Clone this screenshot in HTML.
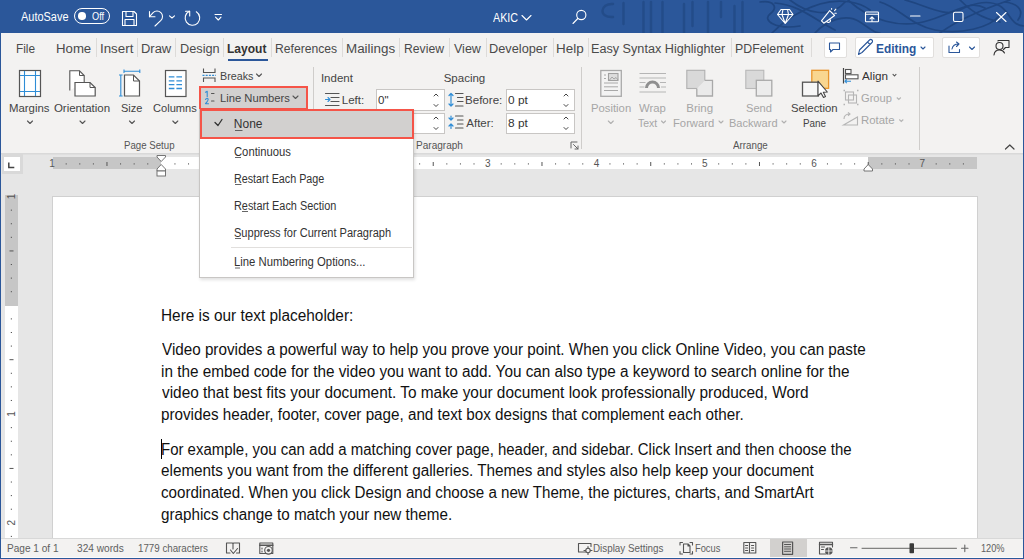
<!DOCTYPE html>
<html><head><meta charset="utf-8">
<style>
*{margin:0;padding:0;box-sizing:border-box}
html,body{width:1024px;height:559px;overflow:hidden;background:#f3f2f1;font-family:"Liberation Sans",sans-serif}
.a{position:absolute}
.t{position:absolute;white-space:nowrap;line-height:1;transform-origin:0 0}
svg{position:absolute;overflow:visible}
.sp{position:absolute;width:1px;top:38px;height:19px;background:#dddbd9}
.rs{position:absolute;width:1px;background:#cfcdcb}
.box{position:absolute;background:#fff;border:1px solid #c8c6c4}
</style></head><body>
<!-- title bar -->
<div class="a" style="left:0;top:0;width:1024px;height:33px;background:#2b579a"></div>
<svg style="left:0;top:0;overflow:hidden" width="1024" height="33" viewBox="0 0 1024 33">
 <g fill="none" stroke="#224a86" stroke-width="2.4" stroke-linecap="round" opacity="0.8">
  <path d="M613,4 C600,3 598,18 613,17"/>
  <path d="M623.5,3 V24 M643.5,2 V33 M651,2 V33 M662.5,2 V33 M684,4 V33 M692.5,2 V26 M708,2 V33 M721,2 V17 M734.5,6 V33 M742.5,2 V33"/>
 </g>
 <g fill="none" stroke="#1f4681" stroke-width="1.7" stroke-linecap="round">
  <path d="M760,2 C775,0 778,8 770,14 S775,30 800,26"/>
  <path d="M775,3 C800,5 815,20 835,30"/>
  <path d="M790,0 C805,12 830,20 845,2"/>
  <path d="M772,33 C785,20 800,10 820,4 S860,2 870,10"/>
  <path d="M815,33 C825,22 845,12 860,22 S875,33 880,33"/>
  <path d="M848,0 C870,20 900,30 930,20 S970,0 985,8"/>
  <path d="M880,2 C900,8 910,25 935,30 S990,28 1000,15"/>
  <path d="M905,0 C925,5 945,18 960,10 S990,0 1000,6 S1010,25 1024,26"/>
  <path d="M940,33 C955,22 975,12 1010,0"/>
  <path d="M960,0 C970,10 980,18 1000,22"/>
  <path d="M1005,2 C1020,4 1024,12 1018,20"/>
 </g>
</svg>
<!-- autosave toggle -->
<div class="a" style="left:74px;top:8px;width:36px;height:16px;border:1.2px solid #fff;border-radius:8px"></div>
<div class="a" style="left:78.3px;top:12.3px;width:7.6px;height:7.6px;background:#fff;border-radius:50%"></div>
<svg style="left:0;top:0" width="1024" height="33" viewBox="0 0 1024 33">
 <g fill="none" stroke="#fff" stroke-width="1.1" stroke-linejoin="round" stroke-linecap="round">
  <!-- save -->
  <path d="M122.5,11.5 H134 L136.5,14 V25.5 H122.5 Z"/>
  <path d="M126,11.5 V16.5 H133 V11.5"/>
  <path d="M125,25.5 V19.5 H134 V25.5"/>
  <!-- undo -->
  <path d="M149.5,16.6 L153.1,12.6 A5.5,5.5 0 0 1 160.9,20.4 L155,26"/>
  <path d="M149.5,11.6 V16.8 H155"/>
  <path d="M169.5,15.8 L172,18 L174.5,15.8"/>
  <!-- redo -->
  <path d="M189.5,11.3 A7.3,7.3 0 1 0 196.3,11.8"/>
  <path d="M185.5,11.3 H189.7 V16"/>
  <!-- customize -->
  <path d="M215,14.5 H221.5 M215.5,17.2 L218.3,20 L221,17.2"/>
  <!-- akic chevron -->
  <path d="M522,15.5 L526.5,20 L531,15.5"/>
  <!-- search -->
  <circle cx="581.3" cy="15" r="4.6"/>
  <path d="M577.8,18.5 L573,23.5"/>
  <!-- diamond -->
  <path d="M781,9.5 H789.5 L793,14.5 L785.2,23.5 L777.5,14.5 Z M777.5,14.5 H793 M783,9.5 L782,14.5 L785.2,23.5 L788.5,14.5 L787.5,9.5"/>
  <!-- megaphone -->
  <path d="M829.7,10.6 L834.6,15.5 L823.8,23.2 L821.5,20.9 Z M826.6,21.2 A1.9,1.9 0 0 0 830.3,19.8 M831.6,8.6 V9.2 M834.6,10.6 L835.9,9.1 M834.9,13.2 H836.3"/>
  <!-- ribbon display -->
  <rect x="865.5" y="12" width="13" height="9.8" rx="0.8"/>
  <path d="M865.5,14.3 H878.5 M872,21.5 V16.8 M870,18.8 L872,16.8 L874,18.8"/>
  <!-- min max close -->
  <path d="M910.5,16 H920"/>
  <rect x="953.5" y="12.3" width="9.5" height="9.2" rx="1.5"/>
  <path d="M996.5,12.5 L1006,21.5 M1006,12.5 L996.5,21.5"/>
 </g>
</svg>
<!-- window borders -->
<div class="a" style="left:0;top:33px;width:1px;height:526px;background:#2b579a"></div>
<div class="a" style="left:1023px;top:33px;width:1px;height:526px;background:#2b579a"></div>
<!-- tab separators -->
<div class="sp" style="left:96px"></div><div class="sp" style="left:137px"></div><div class="sp" style="left:175px"></div>
<div class="sp" style="left:223px"></div><div class="sp" style="left:271px"></div><div class="sp" style="left:342px"></div>
<div class="sp" style="left:399px"></div><div class="sp" style="left:449px"></div><div class="sp" style="left:486px"></div>
<div class="sp" style="left:553px"></div><div class="sp" style="left:588px"></div><div class="sp" style="left:731px"></div>
<div class="sp" style="left:811px"></div>
<div class="a" style="left:228px;top:58.5px;width:40px;height:2.5px;background:#2b579a"></div>
<!-- right buttons -->
<div class="box" style="left:823.5px;top:36.5px;width:23px;height:21.5px;border-color:#e1dfdd;border-radius:2px"></div>
<div class="box" style="left:854.5px;top:36.5px;width:79px;height:21.5px;border-color:#e1dfdd;border-radius:2px"></div>
<div class="box" style="left:941.5px;top:36.5px;width:38px;height:21.5px;border-color:#e1dfdd;border-radius:2px"></div>
<svg style="left:0;top:0" width="1024" height="62" viewBox="0 0 1024 62">
 <g fill="none" stroke="#2b579a" stroke-width="1.1" stroke-linejoin="round" stroke-linecap="round">
  <path d="M829.5,43 H839.5 V49.5 H833 L830.5,52 V49.5 H829.5 Z"/>
  <path d="M858.5,54.5 L859.5,50 L869.5,40 A1.6,1.6 0 0 1 872,42.5 L862,52.5 Z M867.5,42 L870,44.5"/>
  <path d="M921,47 L923,49 L925,47"/>
  <path d="M949,46 V52.5 H959.5 V49.5 M952,49 Q953,44 958.5,44 M956.5,42 L959,44 L956.5,46.5"/>
  <path d="M969.5,47 L972,49.5 L974.5,47"/>
 </g>
 <g fill="none" stroke="#333" stroke-width="1.1" stroke-linejoin="round" stroke-linecap="round">
  <circle cx="999.5" cy="46" r="3.5"/>
  <path d="M994,55 Q994.5,50 999.5,50 Q1003,50 1004.5,53"/>
  <path d="M998,41 V40.5 H1009 V47.5 H1005.5 L1003.5,49.5"/>
 </g>
</svg>
<!-- ribbon separators -->
<div class="rs" style="left:313px;top:67px;height:83px"></div>
<div class="rs" style="left:581px;top:67px;height:82px"></div>
<div class="rs" style="left:919px;top:67px;height:83px"></div>
<!-- ribbon icons -->
<svg style="left:0;top:0" width="1024" height="156" viewBox="0 0 1024 156">
 <g fill="none" stroke-linejoin="miter">
  <!-- margins -->
  <rect x="19.5" y="70.5" width="21" height="26" fill="#fff" stroke="#555" stroke-width="1.2"/>
  <path d="M24.5,71 V96 M35.5,71 V96 M20,75.5 H40 M20,91.5 H40" stroke="#2f8dd6" stroke-width="1.1"/>
  <!-- orientation -->
  <path d="M69.8,90.5 V70.8 H79.5 L84.2,75.5 V82" stroke="#555" stroke-width="1.1" fill="#fff"/>
  <path d="M79.5,70.8 V75.5 H84.2" stroke="#555" stroke-width="1"/>
  <path d="M75,96 V82.5 H90 L95.2,87.5 V96 Z" stroke="#555" stroke-width="1.2" fill="#fff"/>
  <path d="M90,82.5 V87.5 H95.2" stroke="#555" stroke-width="1"/>
  <!-- size -->
  <path d="M124.5,96 V75 H133.5 L139.5,81 V96 Z" stroke="#555" stroke-width="1.2" fill="#fff"/>
  <path d="M133.5,75 V81 H139.5" stroke="#555" stroke-width="1"/>
  <path d="M120.8,75 V96 M119,75 H122.6 M119,96 H122.6 M124,71.2 H139.8 M124,69.5 V73 M139.8,69.5 V73" stroke="#2f8dd6" stroke-width="1.1"/>
  <!-- columns -->
  <rect x="165.5" y="70.5" width="20.5" height="26" fill="#fff" stroke="#555" stroke-width="1.2"/>
  <path d="M168.8,76.8 H174.4 M176.4,76.8 H182 M168.8,80.8 H174.4 M176.4,80.8 H182 M168.8,84.7 H174.4 M176.4,84.7 H182 M168.8,88.5 H174.4 M176.4,88.5 H182" stroke="#2f8dd6" stroke-width="1.3"/>
  <!-- chevrons under big buttons -->
  <g stroke="#555" stroke-width="1.1" stroke-linecap="round" stroke-linejoin="round">
   <path d="M27.5,121 L30,123.5 L32.5,121"/>
   <path d="M80,121 L82.5,123.5 L85,121"/>
   <path d="M129.5,121 L132,123.5 L134.5,121"/>
   <path d="M172.8,121 L175.3,123.5 L177.8,121"/>
   <path d="M256.5,74 L259,76.5 L261.5,74"/>
   <path d="M893,74.3 L894.5,76 L896,74.3"/>
  </g>
  <!-- breaks -->
  <path d="M203.5,68.5 V72.5 H215 V68.5 M203.5,82 V78 H215 V82" stroke="#555" stroke-width="1.1"/>
  <path d="M202.5,75.3 H216" stroke="#2f8dd6" stroke-width="1.2" stroke-dasharray="2,1.2"/>
 </g>
</svg>
<!-- input boxes -->
<div class="box" style="left:376px;top:89px;width:69px;height:21.5px;border-color:#c8c6c4"></div>
<div class="box" style="left:376px;top:112.5px;width:69px;height:21px;border-color:#c8c6c4"></div>
<div class="box" style="left:506px;top:89px;width:68.5px;height:21.5px;border-color:#c8c6c4"></div>
<div class="box" style="left:506px;top:112.5px;width:68.5px;height:21px;border-color:#c8c6c4"></div>
<!-- line numbers button -->
<div class="a" style="left:198.5px;top:85.5px;width:109.5px;height:24.5px;background:#d2d0cf;border:2.5px solid #f55448"></div>
<svg style="left:0;top:0" width="1024" height="156" viewBox="0 0 1024 156">
 <g fill="none" stroke-linecap="round" stroke-linejoin="round">
  <path d="M205.5,92.2 L207.2,91.3 V96.8" stroke="#2f8dd6" stroke-width="1.1"/>
  <path d="M205.5,99.3 Q206.8,98 208,98.8 Q208.8,99.8 205.5,103.7 H208.5" stroke="#2f8dd6" stroke-width="1.1"/>
  <path d="M211.5,93.5 H214 M211.5,101 H214" stroke="#555" stroke-width="1.1"/>
  <path d="M293,96 L295.5,98.5 L298,96" stroke="#555" stroke-width="1.1"/>
  <!-- indent left icon -->
  <path d="M325.5,93.5 H339 M331,97.5 H339 M331,101.5 H339 M325.5,105.5 H339" stroke="#555" stroke-width="1.2"/>
  <path d="M325.5,99.5 H330 M328,97.5 L330,99.5 L328,101.5" stroke="#2f8dd6" stroke-width="1.1"/>
  <!-- before / after icons -->
  <path d="M451,93.5 V106 M449,95.5 L451,93.5 L453,95.5 M449,104 L451,106 L453,104" stroke="#2f8dd6" stroke-width="1.2"/>
  <path d="M455.5,93.5 H463 M457.5,97.5 H463 M457.5,101.5 H463 M455.5,106 H463" stroke="#555" stroke-width="1.2"/>
  <path d="M451,116 V120 M449,118 L451,120 L453,118 M451,124 V128.5 M449,126 L451,124 L453,126" stroke="#2f8dd6" stroke-width="1.2"/>
  <path d="M455.5,116 H463 M457.5,120 H463 M457.5,124 H463 M455.5,128 H463" stroke="#555" stroke-width="1.2"/>
  <!-- spinners -->
  <g stroke="#444" stroke-width="1">
   <path d="M434,96 L436,94 L438,96 M434,104.5 L436,106.5 L438,104.5"/>
   <path d="M434,119 L436,117 L438,119 M434,127.5 L436,129.5 L438,127.5"/>
   <path d="M564,96 L566,94 L568,96 M564,104.5 L566,106.5 L568,104.5"/>
   <path d="M564,119 L566,117 L568,119 M564,127.5 L566,129.5 L568,127.5"/>
  </g>
  <!-- paragraph launcher -->
  <path d="M571,148 V142 H577 M573.5,144.5 L578,149 M578,146 V149 H575" stroke="#666" stroke-width="1"/>
  <!-- collapse chevron -->
  <path d="M1005.5,149 L1009.8,145 L1014,149" stroke="#444" stroke-width="1.2"/>
 </g>
</svg>
<!-- arrange icons -->
<svg style="left:0;top:0" width="1024" height="156" viewBox="0 0 1024 156">
 <g fill="none" stroke-linejoin="miter">
  <!-- position -->
  <rect x="600.8" y="70.5" width="20.5" height="25.8" fill="#f3f3f3" stroke="#a9a9a9" stroke-width="1.3"/>
  <rect x="608.5" y="73.5" width="9.5" height="7" fill="#ddd" stroke="#a0a0a0" stroke-width="1.1"/>
  <path d="M604,75 H606 M604,78.5 H606 M604,83 H618 M604,86.8 H618 M604,90.5 H618" stroke="#a9a9a9" stroke-width="1"/>
  <path d="M609.5,80 L612,77 L614,79 L616,77.5 L618,80" stroke="#a0a0a0" stroke-width="0.9"/>
  <!-- wrap text -->
  <path d="M639.5,73.5 H666 M639.5,78 H666 M639.5,82.5 H645.5 M660,82.5 H666 M639.5,87 H644.5 M661,87 H666 M639.5,92 H666" stroke="#b5b5b5" stroke-width="1.1"/>
  <path d="M646.5,88 A6,6 0 0 1 658.5,88" stroke="#8f8f8f" stroke-width="3"/>
  <!-- bring forward -->
  <rect x="686.8" y="70.3" width="18" height="18.2" fill="#d9d9d9" stroke="#b0b0b0" stroke-width="1.1"/>
  <path d="M705,80.3 H712.5 V96 H696.8 V88.8" fill="#eaeaea" stroke="#a9a9a9" stroke-width="1.3"/>
  <!-- send backward -->
  <rect x="745.8" y="70.3" width="18" height="18.2" fill="#d9d9d9" stroke="#b8b8b8" stroke-width="1.1"/>
  <rect x="756.3" y="80.3" width="15.5" height="15.7" fill="#ececec" stroke="#a9a9a9" stroke-width="1.3"/>
  <!-- selection pane -->
  <rect x="811.8" y="70.3" width="16.8" height="18" fill="#f9d690" stroke="#e8952d" stroke-width="1.3"/>
  <rect x="802.5" y="82.2" width="15.8" height="13.8" fill="#f7f7f7" stroke="#555" stroke-width="1.3"/>
  <path d="M818,81.2 V95.8 L821,93 L823.5,97.5 L825.5,96.5 L823.3,92.2 L827.3,92 Z" fill="#fff" stroke="#444" stroke-width="1.1" stroke-linejoin="round"/>
  <!-- align -->
  <path d="M843.5,68 V83.5" stroke="#444" stroke-width="1.2"/>
  <rect x="845.5" y="69.5" width="5.5" height="4" fill="#fff" stroke="#555" stroke-width="1.1"/>
  <rect x="845.5" y="74.8" width="12.5" height="4" fill="#fff" stroke="#555" stroke-width="1.1"/>
  <path d="M845,81.3 H851 M846.8,79.5 L845,81.3 L846.8,83.1" stroke="#2f8dd6" stroke-width="1.1"/>
  <!-- group -->
  <rect x="845.5" y="92" width="8" height="8" stroke="#b5b5b5" stroke-width="1.1"/>
  <rect x="848.5" y="95" width="8" height="8" stroke="#b5b5b5" stroke-width="1.1"/>
  <path d="M843.5,90.5 h1.5 M857,90.5 h1.5 M843.5,104.5 h1.5 M857,104.5 h1.5" stroke="#b5b5b5" stroke-width="1.6"/>
  <path d="M896.8,97.5 L898.8,99.5 L900.8,97.5" stroke="#b5b5b5" stroke-width="1.1"/>
  <!-- rotate -->
  <path d="M843.5,125 L857.5,117 V125 Z" stroke="#b5b5b5" stroke-width="1.1"/>
  <path d="M844,119 Q844,114 850,114 M848,112.3 L850,114 L848,115.8" stroke="#b5b5b5" stroke-width="1.1"/>
  <path d="M899.3,119.5 L901.3,121.5 L903.3,119.5" stroke="#b5b5b5" stroke-width="1.1"/>
  <g stroke="#b0b0b0" stroke-width="1.1" stroke-linecap="round" stroke-linejoin="round">
   <path d="M608.3,121 L610.8,123.5 L613.3,121"/>
   <path d="M661.5,121 L663.5,123 L665.5,121"/>
   <path d="M719,121 L721,123 L723,121"/>
   <path d="M782,121 L784,123 L786,121"/>
  </g>
 </g>
</svg>
<!-- ribbon bottom shadow -->
<div class="a" style="left:1px;top:152.5px;width:1022px;height:2.5px;background:linear-gradient(#d6d6d6,#e2e2e2)"></div>
<!-- doc area -->
<div class="a" style="left:1px;top:155px;width:1022px;height:383px;background:#e6e6e6"></div>
<!-- tab selector -->
<div class="a" style="left:2px;top:154px;width:21px;height:20px;background:#d9d9d9"></div>
<div class="a" style="left:4px;top:156.5px;width:15.5px;height:14.5px;background:#fff"></div>
<svg style="left:0;top:0" width="40" height="180" viewBox="0 0 40 180"><path d="M8.8,162.5 V167.6 H14.3" fill="none" stroke="#444" stroke-width="1.5"/></svg>
<!-- horizontal ruler -->
<div class="a" style="left:52.5px;top:157px;width:924.8px;height:12px;background:#c6c6c6"></div>
<div class="a" style="left:161px;top:157px;width:707.2px;height:12px;background:#fff"></div>
<svg style="left:0;top:0" width="1024" height="200" viewBox="0 0 1024 200" id="hr"><rect x="65.69" y="163.3" width="1" height="1.2" fill="#555"/><rect x="79.29" y="163.3" width="1" height="1.2" fill="#555"/><rect x="92.88" y="163.3" width="1" height="1.2" fill="#555"/><rect x="106.47" y="162" width="1" height="4" fill="#555"/><rect x="120.07" y="163.3" width="1" height="1.2" fill="#555"/><rect x="133.66" y="163.3" width="1" height="1.2" fill="#555"/><rect x="147.26" y="163.3" width="1" height="1.2" fill="#555"/><rect x="174.44" y="163.3" width="1" height="1.2" fill="#555"/><rect x="188.04" y="163.3" width="1" height="1.2" fill="#555"/><rect x="201.63" y="163.3" width="1" height="1.2" fill="#555"/><rect x="215.22" y="162" width="1" height="4" fill="#555"/><rect x="228.82" y="163.3" width="1" height="1.2" fill="#555"/><rect x="242.41" y="163.3" width="1" height="1.2" fill="#555"/><rect x="256.01" y="163.3" width="1" height="1.2" fill="#555"/><rect x="283.19" y="163.3" width="1" height="1.2" fill="#555"/><rect x="296.79" y="163.3" width="1" height="1.2" fill="#555"/><rect x="310.38" y="163.3" width="1" height="1.2" fill="#555"/><rect x="323.98" y="162" width="1" height="4" fill="#555"/><rect x="337.57" y="163.3" width="1" height="1.2" fill="#555"/><rect x="351.16" y="163.3" width="1" height="1.2" fill="#555"/><rect x="364.76" y="163.3" width="1" height="1.2" fill="#555"/><rect x="391.94" y="163.3" width="1" height="1.2" fill="#555"/><rect x="405.54" y="163.3" width="1" height="1.2" fill="#555"/><rect x="419.13" y="163.3" width="1" height="1.2" fill="#555"/><rect x="432.73" y="162" width="1" height="4" fill="#555"/><rect x="446.32" y="163.3" width="1" height="1.2" fill="#555"/><rect x="459.91" y="163.3" width="1" height="1.2" fill="#555"/><rect x="473.51" y="163.3" width="1" height="1.2" fill="#555"/><rect x="500.69" y="163.3" width="1" height="1.2" fill="#555"/><rect x="514.29" y="163.3" width="1" height="1.2" fill="#555"/><rect x="527.88" y="163.3" width="1" height="1.2" fill="#555"/><rect x="541.48" y="162" width="1" height="4" fill="#555"/><rect x="555.07" y="163.3" width="1" height="1.2" fill="#555"/><rect x="568.66" y="163.3" width="1" height="1.2" fill="#555"/><rect x="582.26" y="163.3" width="1" height="1.2" fill="#555"/><rect x="609.44" y="163.3" width="1" height="1.2" fill="#555"/><rect x="623.04" y="163.3" width="1" height="1.2" fill="#555"/><rect x="636.63" y="163.3" width="1" height="1.2" fill="#555"/><rect x="650.23" y="162" width="1" height="4" fill="#555"/><rect x="663.82" y="163.3" width="1" height="1.2" fill="#555"/><rect x="677.41" y="163.3" width="1" height="1.2" fill="#555"/><rect x="691.01" y="163.3" width="1" height="1.2" fill="#555"/><rect x="718.19" y="163.3" width="1" height="1.2" fill="#555"/><rect x="731.79" y="163.3" width="1" height="1.2" fill="#555"/><rect x="745.38" y="163.3" width="1" height="1.2" fill="#555"/><rect x="758.98" y="162" width="1" height="4" fill="#555"/><rect x="772.57" y="163.3" width="1" height="1.2" fill="#555"/><rect x="786.16" y="163.3" width="1" height="1.2" fill="#555"/><rect x="799.76" y="163.3" width="1" height="1.2" fill="#555"/><rect x="826.94" y="163.3" width="1" height="1.2" fill="#555"/><rect x="840.54" y="163.3" width="1" height="1.2" fill="#555"/><rect x="854.13" y="163.3" width="1" height="1.2" fill="#555"/><rect x="867.73" y="162" width="1" height="4" fill="#555"/><rect x="881.32" y="163.3" width="1" height="1.2" fill="#555"/><rect x="894.91" y="163.3" width="1" height="1.2" fill="#555"/><rect x="908.51" y="163.3" width="1" height="1.2" fill="#555"/><rect x="935.69" y="163.3" width="1" height="1.2" fill="#555"/><rect x="949.29" y="163.3" width="1" height="1.2" fill="#555"/><rect x="962.88" y="163.3" width="1" height="1.2" fill="#555"/><g fill="#fff" stroke="#666" stroke-width="0.9"><path d="M157,155.5 H165.5 V157 L161.2,161.5 L157,157 Z"/><path d="M161.2,164.5 L165.5,169 V171 H157 V169 Z"/><rect x="157" y="171" width="8.5" height="5"/><path d="M868.2,164.5 L872.5,169 V171 H864 V169 Z"/></g></svg>
<!-- vertical ruler -->
<div class="a" style="left:5px;top:195px;width:13px;height:110.5px;background:#c6c6c6"></div>
<div class="a" style="left:5px;top:305.5px;width:13px;height:232px;background:#fff"></div>
<svg style="left:0;top:0" width="40" height="559" viewBox="0 0 40 559" id="vr"><rect x="10.8" y="209.64" width="1.2" height="1" fill="#555"/><rect x="10.8" y="223.24" width="1.2" height="1" fill="#555"/><rect x="10.8" y="236.83" width="1.2" height="1" fill="#555"/><rect x="9.5" y="250.43" width="4" height="1" fill="#555"/><rect x="10.8" y="264.02" width="1.2" height="1" fill="#555"/><rect x="10.8" y="277.61" width="1.2" height="1" fill="#555"/><rect x="10.8" y="291.21" width="1.2" height="1" fill="#555"/><rect x="10.8" y="318.39" width="1.2" height="1" fill="#555"/><rect x="10.8" y="331.99" width="1.2" height="1" fill="#555"/><rect x="10.8" y="345.58" width="1.2" height="1" fill="#555"/><rect x="9.5" y="359.18" width="4" height="1" fill="#555"/><rect x="10.8" y="372.77" width="1.2" height="1" fill="#555"/><rect x="10.8" y="386.36" width="1.2" height="1" fill="#555"/><rect x="10.8" y="399.96" width="1.2" height="1" fill="#555"/><rect x="10.8" y="427.14" width="1.2" height="1" fill="#555"/><rect x="10.8" y="440.74" width="1.2" height="1" fill="#555"/><rect x="10.8" y="454.33" width="1.2" height="1" fill="#555"/><rect x="9.5" y="467.93" width="4" height="1" fill="#555"/><rect x="10.8" y="481.52" width="1.2" height="1" fill="#555"/><rect x="10.8" y="495.11" width="1.2" height="1" fill="#555"/><rect x="10.8" y="508.71" width="1.2" height="1" fill="#555"/><rect x="10.8" y="535.89" width="1.2" height="1" fill="#555"/><text x="0" y="0" transform="translate(15.2,196.50) rotate(-90)" text-anchor="middle" font-family="Liberation Sans" font-size="10" fill="#555">1</text><text x="0" y="0" transform="translate(15.2,414.05) rotate(-90)" text-anchor="middle" font-family="Liberation Sans" font-size="10" fill="#555">1</text><text x="0" y="0" transform="translate(15.2,522.80) rotate(-90)" text-anchor="middle" font-family="Liberation Sans" font-size="10" fill="#555">2</text></svg>
<!-- page -->
<div class="a" style="left:52px;top:196px;width:926px;height:343px;background:#fff;border:1px solid #d0d0d0;border-bottom:none"></div>
<div class="a" style="left:161px;top:439px;width:1px;height:19.5px;background:#000"></div>
<!-- status bar -->
<div class="a" style="left:1px;top:537.5px;width:1022px;height:1px;background:#d8d8d8"></div>
<div class="a" style="left:1px;top:538.5px;width:1022px;height:19px;background:#f3f2f1"></div>
<div class="a" style="left:769.5px;top:538.5px;width:37.5px;height:19.5px;background:#d2d0ce"></div>
<div class="a" style="left:1px;top:557px;width:1022px;height:1px;background:#fafafa"></div><div class="a" style="left:0;top:558px;width:1024px;height:1px;background:#2b579a"></div>
<svg style="left:0;top:0" width="1024" height="559" viewBox="0 0 1024 559">
 <g fill="none" stroke="#555" stroke-width="1.1" stroke-linejoin="round" stroke-linecap="round">
  <!-- book -->
  <path d="M226.5,543 H232.5 L233,544 L233.5,543 H239.5 V553 H236.5 M226.5,543 V553 H230 M233,544 V549"/>
  <path d="M230.5,550 L233.3,553.5 L237.5,548.5"/>
  <!-- track -->
  <rect x="259.8" y="543" width="13" height="10.5"/>
  <path d="M259.8,545.3 H272.8" stroke-width="1.6"/>
  <circle cx="268.5" cy="550.3" r="3.8" fill="#f3f2f1"/>
  <circle cx="268.5" cy="550.3" r="1.6" fill="#555" stroke="none"/>
  <path d="M262,548 v1 M262,551 v1"/>
  <!-- display settings -->
  <path d="M586,552 H578.5 V543.5 H591 V546.5"/>
  <circle cx="588" cy="550.5" r="2.2"/>
  <path d="M588,546.5 V548 M588,553 V554.5 M584,550.5 H585.5 M590.5,550.5 H592"/>
  <!-- focus -->
  <path d="M680,545 V542.5 H682.5 M690,542.5 H692.5 V545 M692.5,551.5 V554 H690 M682.5,554 H680 V551.5"/>
  <path d="M683.5,544 H688 L690,546 V552.5 H683.5 Z M688,544 V546 H690"/>
  <!-- read mode -->
  <path d="M743.8,542.5 H749.5 V553 H743.8 Z M749.5,542.5 H755.8 V553 H749.5"/>
  <path d="M745.5,545.5 h2.2 M745.5,548 h2.2 M745.5,550.5 h2.2 M751.5,545.5 h2.2 M751.5,548 h2.2 M751.5,550.5 h2.2" stroke-width="1"/>
  <!-- print layout -->
  <rect x="782.6" y="542" width="10" height="12.3" stroke="#555" stroke-width="1.2"/>
  <path d="M784.5,544.5 h6.2 M784.5,546.8 h6.2 M784.5,549 h6.2 M784.5,551.3 h6.2" stroke-width="1"/>
  <!-- web layout -->
  <path d="M826,554 H819.5 V542.2 H832.5 V547"/>
  <path d="M819.5,544.5 H832.5" stroke-width="1.4"/>
  <path d="M821.5,547 h3 M821.5,549.5 h2" stroke-width="1"/>
  <circle cx="828.8" cy="551" r="3.8" fill="#555" stroke="none"/>
  <path d="M828.8,547.5 V554.5 M825.3,551 H832.3" stroke="#f3f2f1" stroke-width="0.9"/>
  <!-- zoom -->
  <path d="M850.5,547.8 H857" stroke="#666"/>
  <path d="M862,548.3 H956.5" stroke="#666" stroke-width="1"/>
  <path d="M961.5,548.3 H968 M964.8,545 V551.6" stroke="#666"/>
 </g>
 <rect x="909.5" y="543.3" width="4.5" height="10" rx="0.8" fill="#3a3a3a"/>
</svg>
<div class="t" style="left:20.50px;top:11.00px;font-size:12.5px;font-weight:400;color:#ffffff;transform:scaleX(0.8759);">AutoSave</div>
<div class="t" style="left:92.00px;top:10.90px;font-size:10.5px;font-weight:400;color:#ffffff;transform:scaleX(0.8786);">Off</div>
<div class="t" style="left:493.10px;top:12.00px;font-size:12px;font-weight:400;color:#ffffff;transform:scaleX(0.8963);">AKIC</div>
<div class="t" style="left:16.25px;top:43.20px;font-size:12.5px;font-weight:400;color:#4a4a4a;transform:scaleX(0.9474);">File</div>
<div class="t" style="left:56.14px;top:43.20px;font-size:12.5px;font-weight:400;color:#4a4a4a;transform:scaleX(1.0562);">Home</div>
<div class="t" style="left:99.73px;top:43.20px;font-size:12.5px;font-weight:400;color:#4a4a4a;transform:scaleX(1.0667);">Insert</div>
<div class="t" style="left:140.96px;top:43.20px;font-size:12.5px;font-weight:400;color:#4a4a4a;transform:scaleX(1.0357);">Draw</div>
<div class="t" style="left:179.68px;top:43.20px;font-size:12.5px;font-weight:400;color:#4a4a4a;transform:scaleX(1.0189);">Design</div>
<div class="t" style="left:275.43px;top:43.20px;font-size:12.5px;font-weight:400;color:#4a4a4a;transform:scaleX(0.9714);">References</div>
<div class="t" style="left:346.23px;top:43.20px;font-size:12.5px;font-weight:400;color:#4a4a4a;transform:scaleX(1.0705);">Mailings</div>
<div class="t" style="left:403.82px;top:43.20px;font-size:12.5px;font-weight:400;color:#4a4a4a;transform:scaleX(0.9750);">Review</div>
<div class="t" style="left:454.00px;top:43.20px;font-size:12.5px;font-weight:400;color:#4a4a4a;">View</div>
<div class="t" style="left:489.48px;top:43.20px;font-size:12.5px;font-weight:400;color:#4a4a4a;transform:scaleX(1.0214);">Developer</div>
<div class="t" style="left:556.42px;top:43.20px;font-size:12.5px;font-weight:400;color:#4a4a4a;transform:scaleX(1.0750);">Help</div>
<div class="t" style="left:591.49px;top:43.20px;font-size:12.5px;font-weight:400;color:#4a4a4a;transform:scaleX(1.0114);">Easy Syntax Highlighter</div>
<div class="t" style="left:735.01px;top:43.20px;font-size:12.5px;font-weight:400;color:#4a4a4a;transform:scaleX(0.9884);">PDFelement</div>
<div class="t" style="left:227.24px;top:43.20px;font-size:12.5px;font-weight:700;color:#333;transform:scaleX(0.9625);">Layout</div>
<div class="t" style="left:875.55px;top:42.60px;font-size:12.5px;font-weight:700;color:#2b579a;transform:scaleX(0.9512);">Editing</div>
<div class="t" style="left:9.31px;top:102.90px;font-size:11.5px;font-weight:400;color:#444;transform:scaleX(0.9900);">Margins</div>
<div class="t" style="left:53.90px;top:102.90px;font-size:11.5px;font-weight:400;color:#444;">Orientation</div>
<div class="t" style="left:120.94px;top:102.90px;font-size:11.5px;font-weight:400;color:#444;transform:scaleX(0.9571);">Size</div>
<div class="t" style="left:152.53px;top:102.90px;font-size:11.5px;font-weight:400;color:#444;transform:scaleX(0.9659);">Columns</div>
<div class="t" style="left:219.57px;top:71.10px;font-size:11.5px;font-weight:400;color:#444;transform:scaleX(0.9324);">Breaks</div>
<div class="t" style="left:219.52px;top:93.00px;font-size:11.5px;font-weight:400;color:#444;transform:scaleX(0.9757);">Line Numbers</div>
<div class="t" style="left:320.90px;top:73.00px;font-size:11.5px;font-weight:400;color:#444;">Indent</div>
<div class="t" style="left:341.80px;top:95.30px;font-size:11.5px;font-weight:400;color:#444;">Left:</div>
<div class="t" style="left:378.00px;top:95.30px;font-size:11.5px;font-weight:400;color:#333;">0"</div>
<div class="t" style="left:443.70px;top:73.30px;font-size:11.5px;font-weight:400;color:#444;">Spacing</div>
<div class="t" style="left:465.29px;top:95.40px;font-size:11.5px;font-weight:400;color:#444;transform:scaleX(1.0057);">Before:</div>
<div class="t" style="left:508.20px;top:95.40px;font-size:11.5px;font-weight:400;color:#333;transform:scaleX(1.0316);">0 pt</div>
<div class="t" style="left:466.30px;top:118.20px;font-size:11.5px;font-weight:400;color:#444;">After:</div>
<div class="t" style="left:508.20px;top:118.20px;font-size:11.5px;font-weight:400;color:#333;transform:scaleX(1.0316);">8 pt</div>
<div class="t" style="left:590.82px;top:102.90px;font-size:11.5px;font-weight:400;color:#a6a6a6;transform:scaleX(0.9821);">Position</div>
<div class="t" style="left:639.40px;top:102.90px;font-size:11.5px;font-weight:400;color:#a6a6a6;transform:scaleX(0.9852);">Wrap</div>
<div class="t" style="left:637.60px;top:118.00px;font-size:11.5px;font-weight:400;color:#a6a6a6;transform:scaleX(0.9143);">Text</div>
<div class="t" style="left:686.30px;top:102.90px;font-size:11.5px;font-weight:400;color:#a6a6a6;">Bring</div>
<div class="t" style="left:673.12px;top:118.00px;font-size:11.5px;font-weight:400;color:#a6a6a6;transform:scaleX(0.9780);">Forward</div>
<div class="t" style="left:745.73px;top:102.90px;font-size:11.5px;font-weight:400;color:#a6a6a6;transform:scaleX(0.9680);">Send</div>
<div class="t" style="left:728.64px;top:118.00px;font-size:11.5px;font-weight:400;color:#a6a6a6;transform:scaleX(0.9612);">Backward</div>
<div class="t" style="left:791.02px;top:102.90px;font-size:11.5px;font-weight:400;color:#444;transform:scaleX(0.9848);">Selection</div>
<div class="t" style="left:802.84px;top:117.90px;font-size:11.5px;font-weight:400;color:#444;transform:scaleX(0.8577);">Pane</div>
<div class="t" style="left:861.80px;top:70.60px;font-size:11.5px;font-weight:400;color:#333;transform:scaleX(1.0160);">Align</div>
<div class="t" style="left:860.83px;top:93.00px;font-size:11.5px;font-weight:400;color:#a6a6a6;transform:scaleX(0.9677);">Group</div>
<div class="t" style="left:860.81px;top:115.30px;font-size:11.5px;font-weight:400;color:#a6a6a6;transform:scaleX(0.9879);">Rotate</div>
<div class="t" style="left:123.62px;top:139.90px;font-size:11px;font-weight:400;color:#555;transform:scaleX(0.8786);">Page Setup</div>
<div class="t" style="left:415.99px;top:139.90px;font-size:11px;font-weight:400;color:#555;transform:scaleX(0.9140);">Paragraph</div>
<div class="t" style="left:733.20px;top:139.90px;font-size:11px;font-weight:400;color:#555;transform:scaleX(0.8897);">Arrange</div>
<div class="t" style="left:161.04px;top:307.80px;font-size:16px;font-weight:400;color:#111111;transform:scaleX(0.9611);">Here is our text placeholder:</div>
<div class="t" style="left:162.00px;top:341.80px;font-size:16px;font-weight:400;color:#111111;transform:scaleX(0.9516);">Video provides a powerful way to help you prove your point. When you click Online Video, you can paste</div>
<div class="t" style="left:161.04px;top:363.70px;font-size:16px;font-weight:400;color:#111111;transform:scaleX(0.9556);">in the embed code for the video you want to add. You can also type a keyword to search online for the</div>
<div class="t" style="left:162.00px;top:385.20px;font-size:16px;font-weight:400;color:#111111;transform:scaleX(0.9613);">video that best fits your document. To make your document look professionally produced, Word</div>
<div class="t" style="left:161.05px;top:407.10px;font-size:16px;font-weight:400;color:#111111;transform:scaleX(0.9507);">provides header, footer, cover page, and text box designs that complement each other.</div>
<div class="t" style="left:161.06px;top:441.50px;font-size:16px;font-weight:400;color:#111111;transform:scaleX(0.9355);">For example, you can add a matching cover page, header, and sidebar. Click Insert and then choose the</div>
<div class="t" style="left:161.04px;top:463.20px;font-size:16px;font-weight:400;color:#111111;transform:scaleX(0.9551);">elements you want from the different galleries. Themes and styles also help keep your document</div>
<div class="t" style="left:161.05px;top:485.00px;font-size:16px;font-weight:400;color:#111111;transform:scaleX(0.9463);">coordinated. When you click Design and choose a new Theme, the pictures, charts, and SmartArt</div>
<div class="t" style="left:161.05px;top:507.20px;font-size:16px;font-weight:400;color:#111111;transform:scaleX(0.9516);">graphics change to match your new theme.</div>
<div class="t" style="left:6.54px;top:543.10px;font-size:10.5px;font-weight:400;color:#606060;transform:scaleX(0.9596);">Page 1 of 1</div>
<div class="t" style="left:76.74px;top:543.10px;font-size:10.5px;font-weight:400;color:#606060;transform:scaleX(0.9638);">324 words</div>
<div class="t" style="left:138.07px;top:543.10px;font-size:10.5px;font-weight:400;color:#606060;transform:scaleX(0.9284);">1779 characters</div>
<div class="t" style="left:592.86px;top:542.80px;font-size:10.5px;font-weight:400;color:#606060;transform:scaleX(0.9351);">Display Settings</div>
<div class="t" style="left:694.91px;top:542.80px;font-size:10.5px;font-weight:400;color:#606060;transform:scaleX(0.8852);">Focus</div>
<div class="t" style="left:980.62px;top:543.00px;font-size:10.5px;font-weight:400;color:#606060;transform:scaleX(0.8769);">120%</div>
<div class="t" style="left:49.30px;top:158.50px;font-size:10px;font-weight:400;color:#555;">1</div>
<div class="t" style="left:267.10px;top:158.50px;font-size:10px;font-weight:400;color:#555;">1</div>
<div class="t" style="left:376.35px;top:158.50px;font-size:10px;font-weight:400;color:#555;">2</div>
<div class="t" style="left:485.10px;top:158.50px;font-size:10px;font-weight:400;color:#555;">3</div>
<div class="t" style="left:593.85px;top:158.50px;font-size:10px;font-weight:400;color:#555;">4</div>
<div class="t" style="left:702.10px;top:158.50px;font-size:10px;font-weight:400;color:#555;">5</div>
<div class="t" style="left:811.35px;top:158.50px;font-size:10px;font-weight:400;color:#555;">6</div>
<div class="t" style="left:919.60px;top:158.50px;font-size:10px;font-weight:400;color:#555;">7</div>
<!-- dropdown menu -->
<div class="a" style="left:199px;top:109px;width:215px;height:169px;background:#fff;border:1px solid #c8c6c4;box-shadow:1px 2px 3px rgba(0,0,0,0.12)"></div>
<div class="a" style="left:199.5px;top:109px;width:214px;height:29.5px;background:#d2d0cf;border:2.5px solid #f55448"></div>
<div class="a" style="left:231px;top:247px;width:181px;height:1px;background:#e1dfdd"></div>
<svg style="left:0;top:0" width="1024" height="300" viewBox="0 0 1024 300">
 <path d="M215,122.5 L218,125.5 L222,119.5" fill="none" stroke="#333" stroke-width="1.3" stroke-linecap="round" stroke-linejoin="round"/>
 <g stroke="#555" stroke-width="0.9">
  <path d="M235,130.5 H242.5"/>
  <path d="M235,157.5 H241"/>
  <path d="M235,184.5 H241.5"/>
  <path d="M242,211.5 H248"/>
  <path d="M235,238.5 H241"/>
  <path d="M235,268 H240"/>
 </g>
</svg>
<div class="t" style="left:233.80px;top:118.00px;font-size:12px;font-weight:400;color:#333;">None</div>
<div class="t" style="left:233.86px;top:145.60px;font-size:12px;font-weight:400;color:#333;transform:scaleX(0.9373);">Continuous</div>
<div class="t" style="left:233.70px;top:172.70px;font-size:12px;font-weight:400;color:#333;transform:scaleX(0.8960);">Restart Each Page</div>
<div class="t" style="left:233.69px;top:199.90px;font-size:12px;font-weight:400;color:#333;transform:scaleX(0.9072);">Restart Each Section</div>
<div class="t" style="left:233.68px;top:226.90px;font-size:12px;font-weight:400;color:#333;transform:scaleX(0.9201);">Suppress for Current Paragraph</div>
<div class="t" style="left:233.66px;top:256.40px;font-size:12px;font-weight:400;color:#333;transform:scaleX(0.9431);">Line Numbering Options...</div>
</body></html>
